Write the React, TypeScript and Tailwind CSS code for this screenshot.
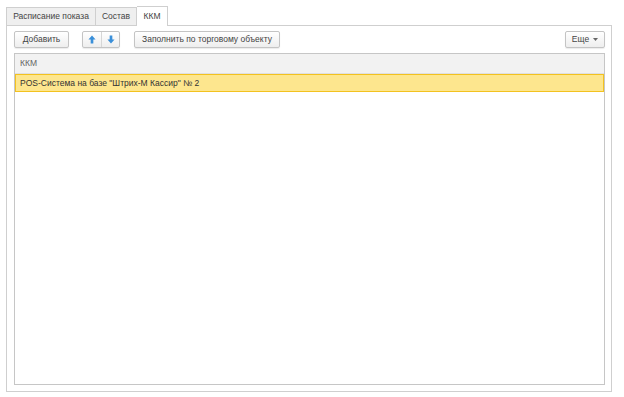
import React from "react";

const ArrowUp = () => (
  <svg width="8" height="9" viewBox="0 0 9 10">
    <path d="M4.5 0.5 L8.5 5 L6 5 L6 9.5 L3 9.5 L3 5 L0.5 5 Z" fill="#3a8fd9" />
  </svg>
);
const ArrowDown = () => (
  <svg width="8" height="9" viewBox="0 0 9 10">
    <path d="M4.5 9.5 L8.5 5 L6 5 L6 0.5 L3 0.5 L3 5 L0.5 5 Z" fill="#3a8fd9" />
  </svg>
);

const btn =
  "h-[17px] flex items-center border border-[#c4c4c4] rounded-[2px] bg-gradient-to-b from-white to-[#eeeeee] shadow-[0_1px_1px_rgba(0,0,0,0.08)] text-[#444] whitespace-nowrap";

export default function App() {
  return (
    <div
      className="w-[624px] h-[397px] bg-white text-[8.5px] text-[#333] flex flex-col"
      style={{ fontFamily: '"Liberation Sans", Arial, sans-serif' }}
    >
      <div className="flex pl-[6px] pt-[6px] h-[25px] items-end relative z-10">
        <div className="h-[18px] w-[90px] justify-center flex items-center border border-[#cfcfcf] border-b-0 bg-[#efefef] text-[#444]">
          Расписание показа
        </div>
        <div className="h-[18px] w-[41px] justify-center flex items-center border border-[#cfcfcf] border-b-0 border-l-0 bg-[#efefef] text-[#444]">
          Состав
        </div>
        <div className="h-[20px] w-[31px] justify-center flex items-center border border-[#cfcfcf] border-b-0 border-l-0 bg-white text-[#444] mb-[-1px] pb-[1px]">
          ККМ
        </div>
      </div>
      <div className="ml-[6px] w-[606px] h-[367px] border border-[#cfcfcf] flex flex-col pt-[5px] pl-[7px] pr-[6px] pb-[6px]">
        <div className="flex items-center h-[17px]">
          <div className={btn + " w-[55px] justify-center"}>Добавить</div>
          <div className={btn + " ml-[13px] w-[38px]"}>
            <div className="w-[19px] h-full flex items-center justify-center border-r border-[#d6d6d6]">
              <ArrowUp />
            </div>
            <div className="flex-1 h-full flex items-center justify-center">
              <ArrowDown />
            </div>
          </div>
          <div className={btn + " ml-[14px] w-[146px] justify-center"}>
            Заполнить по торговому объекту
          </div>
          <div className="flex-1" />
          <div className={btn + " w-[40px] justify-center gap-[4px]"}>
            <span>Еще</span>
            <svg width="5" height="3" viewBox="0 0 5 3">
              <path d="M0 0 L5 0 L2.5 3 Z" fill="#666" />
            </svg>
          </div>
        </div>
        <div className="mt-[5px] flex-1 border border-[#c6c6c6] flex flex-col">
          <div className="h-[20px] bg-[#f2f2f2] border-b border-[#e0e0e0] flex items-center pl-[5px] text-[#666]">
            ККМ
          </div>
          <div className="h-[18px] bg-[#fde68e] border border-[#f3c21f] flex items-center pl-[4px] text-[#333]">
            POS-Система на базе "Штрих-М Кассир" № 2
          </div>
        </div>
      </div>
    </div>
  );
}
